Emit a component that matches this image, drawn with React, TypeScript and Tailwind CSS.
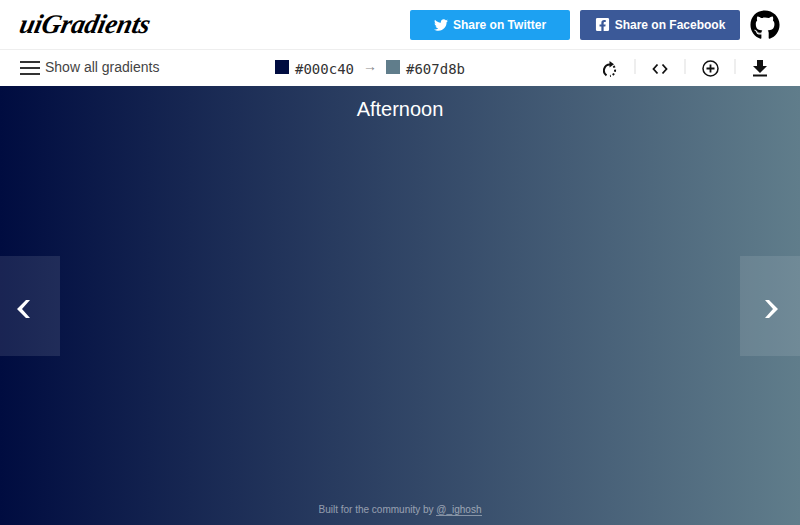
import React from 'react';
import { FaTwitter, FaFacebookSquare, FaGithub } from 'react-icons/fa';

const sans = 'font-["Liberation_Sans",Arial,sans-serif]';

const RefreshIcon = () => (
  <svg width="14" height="17" viewBox="0 0 14 17" fill="none" stroke="#111" strokeWidth="2">
    <path d="M7 4.500a6 6 0 0 0-3.500 10.900" />
    <path d="M6.500 1 L11 4.300 L6.500 7.500 Z" fill="#111" stroke="none" />
    <path d="M10.500 6a6 6 0 0 1-3.500 10" strokeDasharray="2 2" />
  </svg>
);

const CodeIcon = () => (
  <svg width="16" height="12" viewBox="0 0 16 12" fill="none" stroke="#111" strokeWidth="1.800">
    <path d="M5.500 1.500 1.500 6l4 4.500" />
    <path d="M10.500 1.500l4 4.500-4 4.500" />
  </svg>
);

const AddIcon = () => (
  <svg width="17" height="17" viewBox="0 0 17 17" fill="none" stroke="#111" strokeWidth="1.500">
    <circle cx="8.500" cy="8.500" r="7.500" />
    <path d="M8.500 4.500v8M4.500 8.500h8" strokeWidth="1.800" />
  </svg>
);

const DownloadIcon = () => (
  <svg width="16" height="17" viewBox="0 0 16 17" fill="#111">
    <path d="M5 0h6v6h4l-7 7-7-7h4z" />
    <rect x="1" y="14.500" width="14" height="2" />
  </svg>
);

const tools = [<RefreshIcon key="r" />, <CodeIcon key="c" />, <AddIcon key="a" />, <DownloadIcon key="d" />];

export default function App() {
  return (
    <div className={`h-[525px] w-[800px] flex flex-col overflow-hidden bg-white ${sans}`}>
      {/* Top header */}
      <header className="h-[50px] flex items-center justify-between pl-5 pr-5 border-b border-[#eeeeee]">
        <span className='font-["Liberation_Serif",serif] font-bold italic text-[27px] leading-none tracking-[-0.2px] text-black -skew-x-12'>
          uiGradients
        </span>
        <div className="flex items-center gap-2.5">
          <a className="w-40 h-[30px] rounded-[2px] bg-[#1da1f2] text-white text-xs font-bold flex items-center justify-center gap-[5px]">
            <FaTwitter className="text-[14px]" />
            Share on Twitter
          </a>
          <a className="w-40 h-[30px] rounded-[2px] bg-[#3b5998] text-white text-xs font-bold flex items-center justify-center gap-[5px]">
            <FaFacebookSquare className="text-[15px]" />
            Share on Facebook
          </a>
          <FaGithub className="text-[30px] text-black" />
        </div>
      </header>

      {/* Toolbar */}
      <div className="h-[36px] flex items-center">
        <div className="w-[275px] pl-5 flex items-center gap-[5px] text-sm text-[#444444]">
          <div className="w-5 flex flex-col gap-1">
            <span className="h-0.5 bg-[#333333]" />
            <span className="h-0.5 bg-[#333333]" />
            <span className="h-0.5 bg-[#333333]" />
          </div>
          <span className="-mt-0.5">Show all gradients</span>
        </div>
        <div className='flex items-center text-sm text-[#333333] font-["DejaVu_Sans_Mono",monospace]'>
          <span className="w-3.5 h-3.5 bg-[#000c40] mr-1.5 -mt-0.5" />
          <span className="mt-0.5">#000c40</span>
          <span className={`w-8 text-center text-sm text-[#888888] -mt-1 ${sans}`}>→</span>
          <span className="w-3.5 h-3.5 bg-[#607d8b] mr-1.5 -mt-0.5" />
          <span className="mt-0.5">#607d8b</span>
        </div>
        <div className="ml-auto pr-[15px] flex items-center">
          {tools.map((icon, i) => (
            <div key={i} className="w-[50px] h-[36px] flex items-center justify-center relative">
              <span className="mt-[1px] flex">{icon}</span>
              {i < 3 && <span className="absolute right-[-1px] top-[9px] h-[15px] w-0.5 bg-[#eeeeee]" />}
            </div>
          ))}
        </div>
      </div>

      {/* Gradient */}
      <main className="relative flex-1 flex flex-col items-center justify-between bg-linear-to-r/srgb from-[#000c40] to-[#607d8b]">
        <h1 className="mt-[11px] text-xl leading-6 text-white">Afternoon</h1>
        <button className="absolute left-0 top-[170px] w-[60px] h-[100px] bg-white/10 flex items-center justify-center">
          <svg width="13" height="18" viewBox="0 0 13 18" fill="white" className="mr-[13px] mt-[6px]">
            <path d="M9 0h4L5 9l8 9H9L0 9z" />
          </svg>
        </button>
        <button className="absolute right-0 top-[170px] w-[60px] h-[100px] bg-white/10 flex items-center justify-center">
          <svg width="13" height="18" viewBox="0 0 13 18" fill="white" className="ml-[3px] mt-[6px]">
            <path d="M4 0H0l8 9-8 9h4l9-9z" />
          </svg>
        </button>
        <p className="mb-[9px] text-[10px] leading-[12px] text-white/50">
          Built for the community by <a className="border-b border-white/40">@_ighosh</a>
        </p>
      </main>
    </div>
  );
}
